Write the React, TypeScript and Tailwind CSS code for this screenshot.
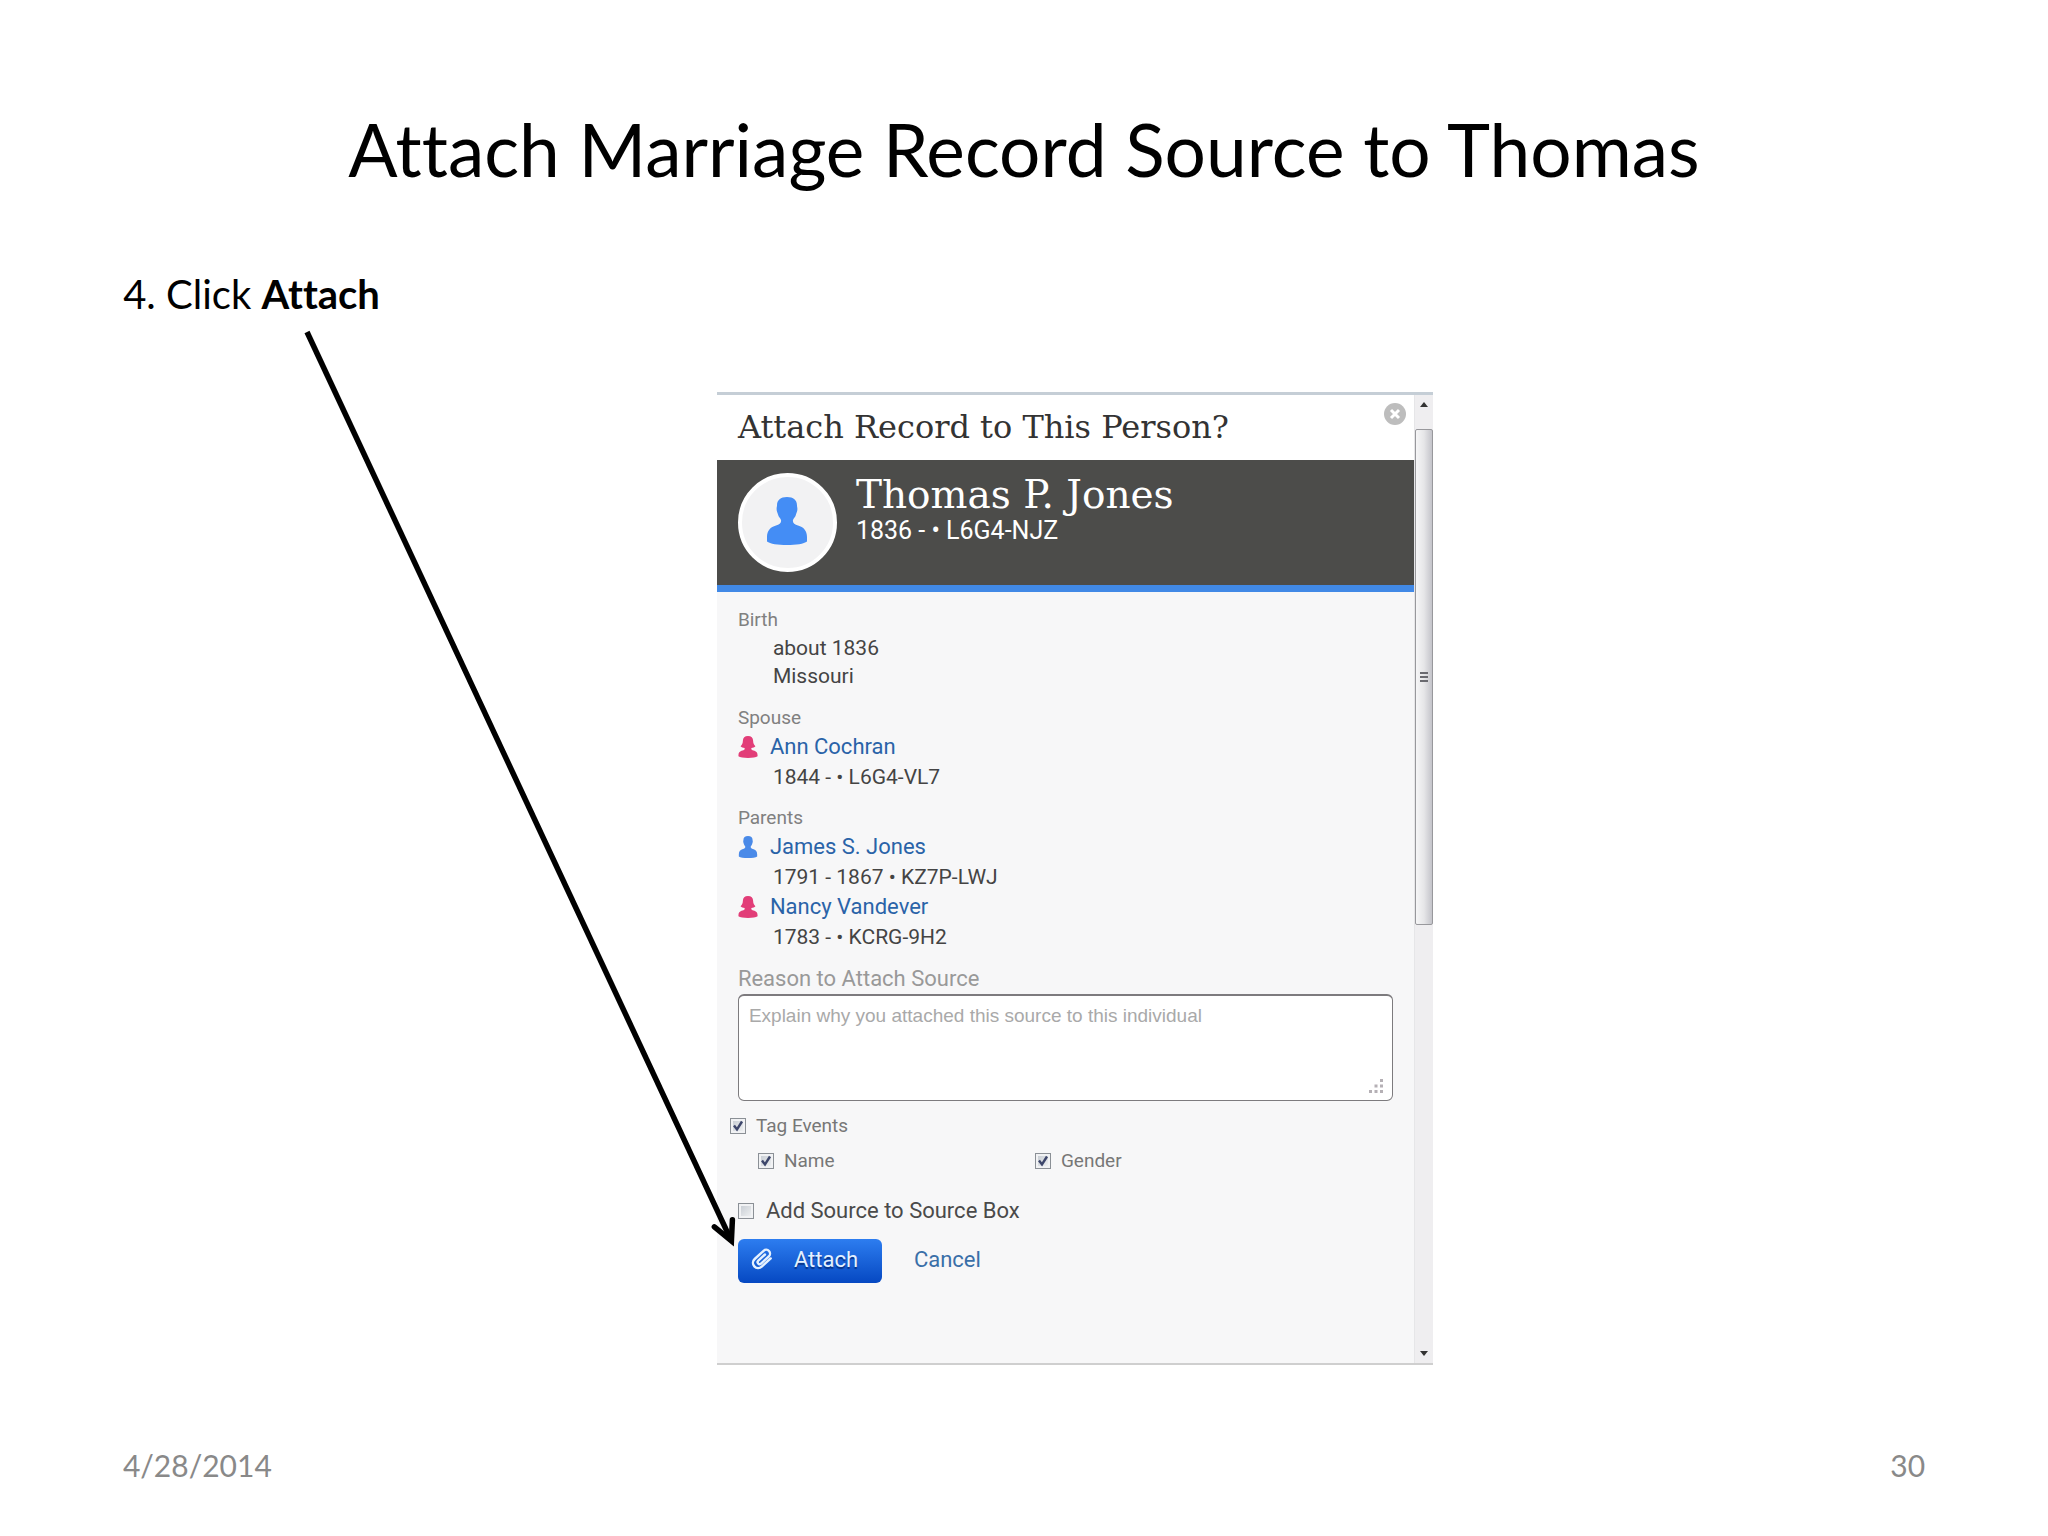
import React from 'react';

type Sex = 'male' | 'female';

interface Person {
  name: string;
  details: string;
  sex: Sex;
}

const spouse: Person[] = [{ name: 'Ann Cochran', details: '1844 - • L6G4-VL7', sex: 'female' }];

const parents: Person[] = [
  { name: 'James S. Jones', details: '1791 - 1867 • KZ7P-LWJ', sex: 'male' },
  { name: 'Nancy Vandever', details: '1783 - • KCRG-9H2', sex: 'female' },
];

const MaleIcon = ({ className }: { className: string }) => (
  <svg viewBox="0 0 40 48" className={className} fill="currentColor" aria-hidden="true">
    <path d="M20 0c-6.500 0-10 3-10 8.500 0 1-.4 1.600-.4 3.500 0 2.500 1 3.600 1.400 5.500.5 2.600 2.500 3.800 3 5.500.6 3-1.500 4.500-5 5.500C3.500 30 0 33.500 0 40v4.500C3 47 11 48 20 48s17-1 20-3.500V40c0-6.500-3.500-10-9-11.500-3.500-1-5.600-2.500-5-5.500.5-1.700 2.500-2.900 3-5.500.4-1.900 1.400-3 1.400-5.500 0-1.900-.4-2.500-.4-3.500C30 3 26.500 0 20 0Z" />
  </svg>
);

const FemaleIcon = ({ className }: { className: string }) => (
  <svg viewBox="0 0 40 46" className={className} fill="currentColor" aria-hidden="true">
    <path d="M20 0C13 0 9.500 4 9.300 10c-.2 5-1.300 8.500-4.800 11.500 2 2.300 5 3.500 8.500 3.500v2.500c-1 1.700-3.500 2.500-6.500 3.500C2.500 32.700 0 35 0 40v2.500C3 45 11 46 20 46s17-1 20-3.500V40c0-5-2.500-7.300-6.500-9-3-1-5.500-1.800-6.500-3.500V25c3.500 0 6.500-1.200 8.500-3.500-3.500-3-4.600-6.500-4.800-11.500C30.500 4 27 0 20 0Z" />
  </svg>
);

const PaperclipIcon = () => (
  <svg viewBox="0 0 24 24" className="h-6 w-6" fill="none" stroke="currentColor" strokeWidth="2.400" strokeLinecap="round" aria-hidden="true">
    <path d="M15 7.500 8.300 13.600a2 2 0 0 0 2.700 3l7.800-7.200a3.800 3.800 0 0 0-5.200-5.600L4.700 12a5.200 5.200 0 0 0 7 7.700l9-8.300" />
  </svg>
);

interface CheckFieldProps {
  id: string;
  label: string;
  checked?: boolean;
  className: string;
}

const CheckField: React.FC<CheckFieldProps> = ({ id, label, checked = false, className }) => (
  <div className={`flex items-center leading-7 ${className}`}>
    <span className="grid">
      <input
        id={id}
        type="checkbox"
        defaultChecked={checked}
        className="peer col-start-1 row-start-1 size-4 appearance-none border border-[#8b9096] bg-linear-to-br from-[#c3c9d0] to-[#f4f5f6] shadow-[inset_0_0_0_2px_#f1f2f4]"
      />
      <svg viewBox="0 0 16 16" className="pointer-events-none invisible col-start-1 row-start-1 size-4 peer-checked:visible" fill="none" stroke="#3d466b" strokeWidth="2.400" aria-hidden="true">
        <path d="M4 7.500 7 11.500 12 3.500" />
      </svg>
    </span>
    <label htmlFor={id}>{label}</label>
  </div>
);

const PersonRows = ({ people }: { people: Person[] }) => (
  <>
    {people.map((person) => (
      <div key={person.name} className="leading-[30px] text-[#444]">
        <div className="flex items-center gap-3">
          {person.sex === 'male' ? (
            <MaleIcon className="h-[22px] w-5 text-[#4a8ae8]" />
          ) : (
            <FemaleIcon className="h-[22px] w-5 text-[#e23d78]" />
          )}
          <a href="#" className="text-[22px] text-[#2a63a8]">{person.name}</a>
        </div>
        <p className="pl-[35px] text-[21px]">{person.details}</p>
      </div>
    ))}
  </>
);

const Scrollbar = () => (
  <div className="flex w-[19px] flex-col border-l border-[#e6e6e8] bg-[#efeef0]">
    <button type="button" aria-label="Scroll up" className="flex h-[34px] items-start justify-center pt-[7px]">
      <svg viewBox="0 0 8 5" className="h-[5px] w-2" fill="#333"><path d="M4 0 8 5H0Z" /></svg>
    </button>
    <div className="flex h-[496px] items-center justify-center rounded-xs border border-[#98989c] bg-linear-to-r from-[#f6f6f7] via-[#e6e6e8] to-[#c4c4ca]">
      <svg viewBox="0 0 8 10" className="h-[10px] w-2" stroke="#6a6a70" strokeWidth="2"><path d="M0 1h8M0 5h8M0 9h8" /></svg>
    </div>
    <button type="button" aria-label="Scroll down" className="mt-auto flex h-5 items-center justify-center">
      <svg viewBox="0 0 8 5" className="h-[5px] w-2" fill="#333"><path d="M4 5 0 0h8Z" /></svg>
    </button>
  </div>
);

const AttachDialog = () => (
  <section className="ml-[35%] flex w-[35%] border-t-3 border-b-2 border-t-[#c5ced6] border-b-[#cfcfcf] font-[Roboto,sans-serif]">
    <div className="flex-1 bg-[#f7f7f8]">
      <div className="flex h-[65px] items-start justify-between bg-white pr-2 pl-[21px]">
        <h2 className="pt-[10px] font-['DejaVu_Serif',serif] text-[32px] leading-[44px] text-[#333]">Attach Record to This Person?</h2>
        <button type="button" aria-label="Close" className="pt-2">
          <svg viewBox="0 0 22 22" className="size-[22px]">
            <circle cx="11" cy="11" r="11" fill="#bdbdbd" />
            <path d="m7 7 8 8m0-8-8 8" stroke="#fff" strokeWidth="3" />
          </svg>
        </button>
      </div>

      <div className="flex h-[132px] items-start gap-[19px] border-b-7 border-[#4189e6] bg-[#4c4c4a] pt-[13px] pl-[21px]">
        <div className="flex size-[99px] items-center justify-center rounded-full border-4 border-white bg-[#f2f2f3] pb-1">
          <MaleIcon className="h-12 w-10 text-[#448df5]" />
        </div>
        <div className="text-white">
          <h3 className="font-['DejaVu_Serif',serif] text-[39px] leading-[44px]">Thomas P. Jones</h3>
          <p className="text-[25px] leading-7">1836 - • L6G4-NJZ</p>
        </div>
      </div>

      <div className="px-[21px] pt-[14px] pb-20">
        <h4 className="text-[19px] leading-7 text-[#808080]">Birth</h4>
        <div className="pl-[35px] text-[21px] leading-7 text-[#444]">
          <p>about 1836</p>
          <p>Missouri</p>
        </div>

        <h4 className="mt-[14px] text-[19px] leading-7 text-[#808080]">Spouse</h4>
        <PersonRows people={spouse} />

        <h4 className="mt-3 text-[19px] leading-7 text-[#808080]">Parents</h4>
        <PersonRows people={parents} />

        <label htmlFor="reason" className="mt-[13px] block text-[22px] leading-7 text-[#999]">Reason to Attach Source</label>
        <div className="relative">
          <textarea
            id="reason"
            placeholder="Explain why you attached this source to this individual"
            className="mt-px block h-[107px] w-full resize-none rounded-md border border-t-2 border-[#7d7b7e] bg-white px-[10px] py-2 font-['Liberation_Sans',sans-serif] text-[19px] leading-6 placeholder:text-[#a9a9a9]"
          />
          <svg viewBox="0 0 14 14" className="absolute right-[10px] bottom-2 size-[14px]" fill="#b5b0b5" aria-hidden="true">
            <path d="M11 0h3v3h-3zM5.500 5.500h3v3h-3zM11 5.500h3v3h-3zM0 11h3v3H0zM5.500 11h3v3h-3zM11 11h3v3h-3z" />
          </svg>
        </div>

        <div className="mt-[11px] text-[19px] text-[#777]">
          <CheckField id="tag-events" label="Tag Events" checked className="-ml-2 gap-[10px]" />
          <div className="mt-[7px] grid grid-cols-[277px_1fr] pl-5">
            <CheckField id="tag-name" label="Name" checked className="gap-[10px]" />
            <CheckField id="tag-gender" label="Gender" checked className="gap-[10px]" />
          </div>
        </div>
        <CheckField id="source-box" label="Add Source to Source Box" className="mt-[22px] gap-3 text-[22px] text-[#4a4a4a]" />

        <div className="mt-[14px] flex items-center gap-8 text-[22px]">
          <button type="button" className="flex h-11 w-36 items-center gap-5 rounded-md bg-linear-to-b from-[#2d7df0] to-[#0648c2] pb-1 pl-3 text-[#e4f1ff] text-shadow-[0_2px_1px_#063285]">
            <PaperclipIcon />
            Attach
          </button>
          <a href="#" className="pb-1 text-[#3a6fa8]">Cancel</a>
        </div>
      </div>
    </div>
    <Scrollbar />
  </section>
);

// Points from the instruction to the Attach button
const PointerArrow = () => (
  <svg viewBox="0 0 450 950" className="pointer-events-none absolute top-[73px] left-[14%] w-[22%]" fill="none" stroke="#000" strokeWidth="5.500" aria-hidden="true">
    <path d="M20 12 444 920" />
    <path d="M427 906 444 920 445 899" strokeLinecap="round" strokeMiterlimit="10" />
  </svg>
);

export default function App() {
  return (
    <div className="flex min-h-screen flex-col bg-white px-[6%] font-[Lato,sans-serif] text-black [font-variant-ligatures:none]">
      <header className="pt-[104px] text-center">
        <h1 className="text-[73px] leading-[90px]">Attach Marriage Record Source to Thomas</h1>
      </header>
      <main className="relative -mx-[6.800%] mt-[53px]">
        <p className="pl-[6%] text-[40px] leading-[94px]">
          4. Click <strong>Attach</strong>
        </p>
        <div className="mt-[51px]">
          <AttachDialog />
        </div>
        <PointerArrow />
      </main>
      <footer className="mt-auto flex justify-between pb-[51px] text-3xl leading-10 text-[#898989]">
        <time dateTime="2014-04-28">4/28/2014</time>
        <span>30</span>
      </footer>
    </div>
  );
}
